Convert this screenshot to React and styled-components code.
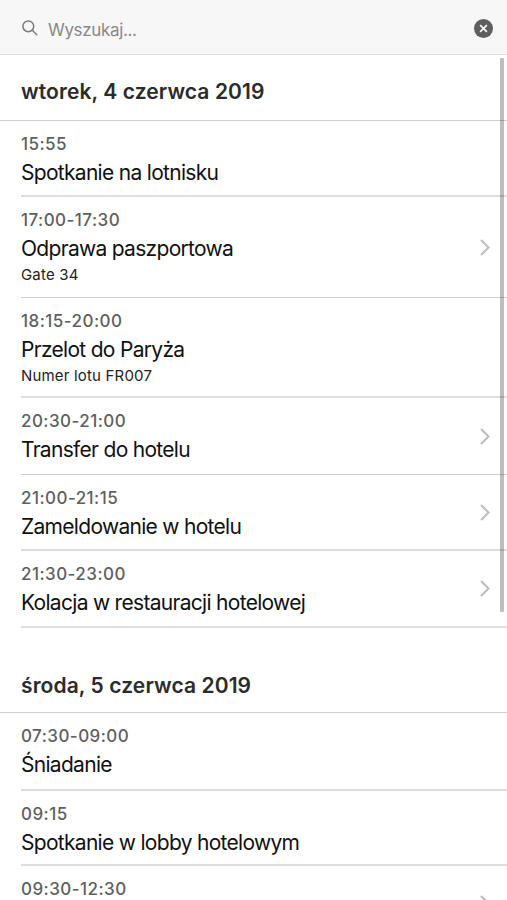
import React from "react";
import styled, {createGlobalStyle} from "styled-components";

const days = [
  {
    date: "wtorek, 4 czerwca 2019",
    top: 24,
    height: 66,
    events: [
      {time: "15:55", title: "Spotkanie na lotnisku", height: 76, thick: true},
      {
        time: "17:00-17:30",
        title: "Odprawa paszportowa",
        note: "Gate 34",
        height: 101,
        link: true
      },
      {
        time: "18:15-20:00",
        title: "Przelot do Paryża",
        note: "Numer lotu FR007",
        height: 100,
        thick: true
      },
      {time: "20:30-21:00", title: "Transfer do hotelu", height: 77, link: true},
      {
        time: "21:00-21:15",
        title: "Zameldowanie w hotelu",
        height: 76,
        thick: true,
        link: true
      },
      {
        time: "21:30-23:00",
        title: "Kolacja w restauracji hotelowej",
        height: 77,
        thick: true,
        link: true
      }
    ]
  },
  {
    date: "środa, 5 czerwca 2019",
    top: 45,
    height: 85,
    events: [
      {time: "07:30-09:00", title: "Śniadanie", height: 78, thick: true},
      {
        time: "09:15",
        title: "Spotkanie w lobby hotelowym",
        height: 75,
        thick: true
      },
      {time: "09:30-12:30", title: "", height: 76, link: true}
    ]
  }
];

export default function App() {
  return (
    <React.Fragment>
      <GlobalStyle />
      <Screen>
        <SearchBar>
          <SearchIcon viewBox="0 0 16 16">
            <circle cx="6.3" cy="6.3" r="5.4" />
            <path d="M10.3 10.3L15.2 15.2" />
          </SearchIcon>
          <SearchInput type="text" placeholder="Wyszukaj..." />
          <ClearButton aria-label="Wyczyść">
            <svg width="9" height="9" viewBox="0 0 8 8">
              <path d="M1 1L7 7M7 1L1 7" stroke="#f7f7f7" strokeWidth="1.5" />
            </svg>
          </ClearButton>
        </SearchBar>
        {days.map(day => (
          <section key={day.date}>
            <DayTitle $top={day.top} $height={day.height}>
              {day.date}
            </DayTitle>
            {day.events.map(event => (
              <EventRow
                key={event.time}
                $height={event.height}
                $thick={event.thick}
              >
                <EventText>
                  <Time>{event.time}</Time>
                  <Title>{event.title}</Title>
                  {event.note && <Note>{event.note}</Note>}
                </EventText>
                {event.link && (
                  <Chevron viewBox="0 0 10 17">
                    <path d="M1 1L8.5 8.5L1 16" />
                  </Chevron>
                )}
              </EventRow>
            ))}
          </section>
        ))}
        <ScrollThumb />
      </Screen>
    </React.Fragment>
  );
}

const GlobalStyle = createGlobalStyle`
  * {
    box-sizing: border-box;
  }
  body {
    margin: 0;
    background: #fff;
    font-family: Inter, "Liberation Sans", sans-serif;
  }
`;

const Screen = styled.div`
  position: relative;
  height: 900px;
  overflow: hidden;
`;

const SearchBar = styled.div`
  display: flex;
  align-items: center;
  height: 55px;
  padding: 2px 14px 0 22px;
  background: #f7f7f7;
  border-bottom: 1px solid #dcdcdc;
`;

const SearchIcon = styled.svg`
  width: 16px;
  height: 16px;
  fill: none;
  stroke: #7c7c7c;
  stroke-width: 1.5;
`;

const SearchInput = styled.input`
  flex: 1;
  min-width: 0;
  margin-left: 10px;
  padding: 3px 0 0;
  border: 0;
  outline: none;
  background: transparent;
  font-family: inherit;
  font-size: 17px;
  letter-spacing: -0.35px;
  &::placeholder {
    color: #888;
    opacity: 1;
  }
`;

const ClearButton = styled.button`
  display: flex;
  align-items: center;
  justify-content: center;
  width: 19px;
  height: 19px;
  padding: 0;
  border: 0;
  border-radius: 50%;
  background: #5e5e5e;
`;

const DayTitle = styled.h2`
  height: ${props => props.$height}px;
  margin: 0;
  padding: ${props => props.$top}px 21px 0;
  border-bottom: 1px solid #cfcfcf;
  color: #2b2b2b;
  font-size: 21px;
  font-weight: 600;
  letter-spacing: 0.1px;
  line-height: 26px;
`;

const EventRow = styled.div`
  display: flex;
  align-items: center;
  justify-content: space-between;
  height: ${props => props.$height}px;
  margin-left: 21px;
  padding-right: 17px;
  border-bottom: ${props =>
    props.$thick ? "2px solid #dedede" : "1px solid #cfcfcf"};
`;

const EventText = styled.div`
  align-self: flex-start;
  padding-top: 11px;
`;

const Time = styled.div`
  color: #5f5f5f;
  font-size: 17px;
  font-weight: 500;
  letter-spacing: 0.45px;
  line-height: 24px;
`;

const Title = styled.div`
  min-height: 32px;
  margin-top: 1px;
  color: #111;
  font-size: 21px;
  letter-spacing: -0.7px;
  line-height: 32px;
`;

const Note = styled.div`
  color: #222;
  font-size: 15px;
  letter-spacing: 0.18px;
  line-height: 20px;
`;

const Chevron = styled.svg`
  width: 10px;
  height: 17px;
  fill: none;
  stroke: #bdbdbd;
  stroke-width: 2.1;
`;

/* overlay scroll indicator */
const ScrollThumb = styled.div`
  position: absolute;
  top: 58px;
  right: 3px;
  width: 4px;
  height: 554px;
  border-radius: 1px;
  background: rgba(0, 0, 0, 0.26);
`;
